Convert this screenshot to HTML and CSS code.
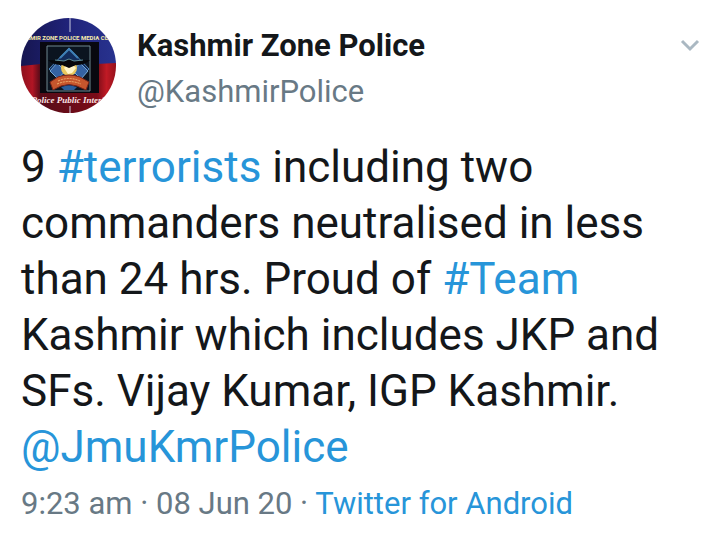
FILE: index.html
```html
<!DOCTYPE html>
<html lang="en">
<head>
  <meta charset="UTF-8">
  <meta name="viewport" content="width=device-width, initial-scale=1.0">
  <title>Kashmir Zone Police</title>
  <link rel="stylesheet" href="styles.css">
</head>
<body>
  <article class="tweet">
    <header class="tweet-header">
      <svg class="avatar" viewBox="0 0 95 95" role="img" aria-label="Kashmir Zone Police">
        <defs>
          <linearGradient id="blue" x1="0" x2="1" y1="0" y2="0">
            <stop offset="0" stop-color="#161650"/>
            <stop offset=".5" stop-color="#20237a"/>
            <stop offset="1" stop-color="#28338f"/>
          </linearGradient>
          <linearGradient id="red" x1="0" x2="1" y1="0" y2="0">
            <stop offset="0" stop-color="#8d101d"/>
            <stop offset=".12" stop-color="#b01524"/>
            <stop offset=".2" stop-color="#570b18"/>
            <stop offset=".8" stop-color="#7b0c18"/>
            <stop offset=".9" stop-color="#c01a25"/>
            <stop offset="1" stop-color="#96111c"/>
          </linearGradient>
          <clipPath id="circle"><circle cx="47.5" cy="47.5" r="47.5"/></clipPath>
        </defs>
        <g clip-path="url(#circle)">
          <rect width="95" height="48" fill="url(#blue)"/>
          <path d="M0 48l20-2h55l20-1v50H0z" fill="url(#red)"/>
          <path d="M49 0v14M49 88v7" stroke="#c9cce0" stroke-width="1"/>
          <path d="M19 24h59v51H19z" fill="#08080f"/>
          <path d="M26 28h43v45H26z" fill="#0b1420" stroke="#6f8790" stroke-width="1"/>
          <!-- emblem -->
          <path d="M48 30l20 21-20 21-20-21z" fill="#122c5c" stroke="#4d86b8" stroke-width="1"/>
          <path d="M29 53l7-8 8 8-7 8zM52 53l7-8 8 8-7 8z" fill="#3563a3" stroke="#75a9d4" stroke-width="1"/>
          <path d="M39 40l9-9 9 9" fill="none" stroke="#3f7fb5" stroke-width="2"/>
          <circle cx="48" cy="50" r="8" fill="#e9c95f"/>
          <path d="M43 50l3-4 6 1 3 3-4 5-4 1z" fill="#fff6c9"/>
          <path d="M27 42c7 0 12 1 16 1l5-2 5 2c5 0 9-1 16-1-4 4-9 5-14 5l-7 3-7-3c-5 0-10-1-14-5z" fill="#05070b"/>
          <path d="M34 42l9 1 5-2 5 2 9-1" fill="none" stroke="#5e8d96" stroke-width="1"/>
          <path d="M29 64l8-5q11-4 22 0l9 5-3 8-9-4q-8-3-16 0l-8 4z" fill="#c6562d" stroke="#7b2418" stroke-width="1"/>
          <path d="M37 63q11-5 22 0M36 66q12-5 24 0" fill="none" stroke="#efb271" stroke-width="1" stroke-dasharray="2 1"/>
          <path d="M40 69q8-3 16 0l-3 3H43z" fill="#2b5d9b"/>
          <text class="avatar-title" x="48" y="22" text-anchor="middle">SHMIR ZONE POLICE MEDIA CENT</text>
          <text class="avatar-motto" x="47" y="85" text-anchor="middle">Police Public Interf</text>
        </g>
      </svg>
      <div class="author">
        <strong class="name">Kashmir Zone Police</strong>
        <a class="handle" href="#">@KashmirPolice</a>
      </div>
      <button class="more" type="button" aria-label="More options">
        <svg width="20" height="14" viewBox="0 0 20 14" aria-hidden="true">
          <path d="M2 3l8 8 8-8" fill="none" stroke="#aab8c2" stroke-width="3"/>
        </svg>
      </button>
    </header>
    <p class="tweet-text">9 <a href="#">#terrorists</a> including two commanders neutralised in less than 24 hrs. Proud of <a href="#">#Team</a> Kashmir which includes JKP and SFs. Vijay Kumar, IGP Kashmir. <a href="#">@JmuKmrPolice</a></p>
    <footer class="tweet-meta">9:23 am · 08 Jun 20 · <a href="#">Twitter for Android</a></footer>
  </article>
</body>
</html>
```
FILE: styles.css
```css
body {
  margin: 0;
  background: #fff;
  color: #14171a;
  font-family: Roboto, "Liberation Sans", sans-serif;
}

a {
  color: #2795d9;
  text-decoration: none;
}

.tweet {
  padding: 18px 10px 18px 21px;
}

.tweet-header {
  display: flex;
  align-items: flex-start;
  gap: 21px;
}

.avatar {
  width: 95px;
  height: 95px;
  flex: none;
}

.avatar-title {
  font: bold 6px "Liberation Sans Narrow", Roboto, sans-serif;
  fill: #f6ecac;
}

.avatar-motto {
  font: italic bold 9px "Liberation Serif", serif;
  fill: #fbe3e5;
}

.author {
  display: flex;
  flex-direction: column;
  flex: 1;
  padding-top: 5px;
  font-size: 31px;
  line-height: 46px;
}

.name {
  font-weight: bold;
}

.handle {
  color: #687985;
}

.more {
  display: flex;
  margin-top: 20px;
  padding: 0;
  border: none;
  background: transparent;
  cursor: pointer;
}

.tweet-text {
  margin: 24px 0 0;
  font-size: 44px;
  line-height: 56px;
}

.tweet-meta {
  margin-top: 6px;
  color: #687985;
  font-size: 31px;
  line-height: 46px;
}
```
